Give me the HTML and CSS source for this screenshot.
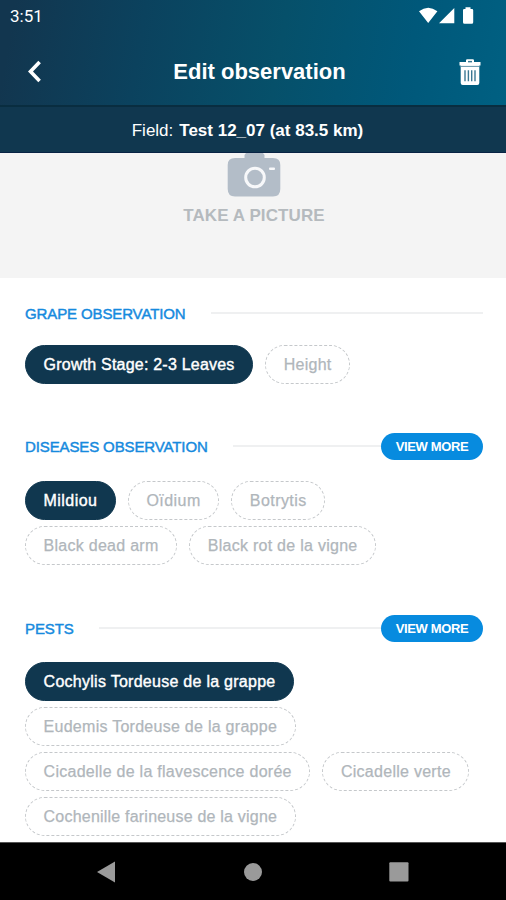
FILE: index.html
```html
<!DOCTYPE html>
<html lang="en">
<head>
<meta charset="utf-8">
<title>Edit observation</title>
<link rel="stylesheet" href="styles.css">
</head>
<body>
<div class="screen">
  <header class="top">
    <div class="status">
      <span>3:51</span>
      <svg width="56" height="18" viewBox="0 0 56 18" fill="#fff"><path d="M0 4.2Q9.2-2.8 18.4 4.2L9.2 16ZM20 16.2 35.3 1V16.2ZM44 3.2Q44 2 45.2 2H46.5V.2H51.5V2H53Q54.2 2 54.2 3.2V15.2Q54.2 16.8 52.7 16.8H45.5Q44 16.8 44 15.2Z"/></svg>
    </div>
    <div class="titlebar">
      <svg class="back" width="16" height="24" viewBox="0 0 16 24" fill="none" stroke="#fff" stroke-width="3.6"><path d="M13.6 2 4.5 11.5l9.1 9.5"/></svg>
      <h1>Edit observation</h1>
      <svg width="22" height="27" viewBox="0 0 22 27"><path fill="#fff" d="M.5 3H7V1.5Q7 .3 8.2.3H13.8Q15 .3 15 1.5V3H21.5V6.5H.5ZM9 2.2V3.2H13V2.2ZM1.7 6H20.3V24Q20.3 26 18.3 26H3.7Q1.7 26 1.7 24Z"/><path d="M9 2.5H13" stroke="#3c7893" stroke-width="1.2"/><path d="M2 7.4H20" stroke="#3c7893" stroke-width=".8"/><path d="M6 11.3V22.3M9.4 11.3V22.3M12.7 11.3V22.3M16 11.3V22.3" stroke="#3c7893" stroke-width="1.4"/></svg>
    </div>
  </header>
  <div class="field"><span>Field:</span><b>Test 12_07 (at 83.5 km)</b></div>
  <main>
    <div class="picture">
      <svg width="54" height="44" viewBox="0 0 54 44"><path fill="#b3bdc8" d="M17.5 5V2L19 0H36L37.5 2V5H46Q53.3 5 53.3 12V36Q53.3 43.5 46 43.5H8Q.7 43.5.7 36V12Q.7 5 8 5Z"/><circle cx="28" cy="24.5" r="9.3" fill="none" stroke="#f7f8fa" stroke-width="3"/><rect x="42" y="14.5" width="6" height="2.6" rx="1" fill="#f7f8fa"/></svg>
      <span>TAKE A PICTURE</span>
    </div>
    <section class="grape">
      <div class="head"><h2>GRAPE OBSERVATION</h2><i></i></div>
      <div class="chips"><span class="chip on snug">Growth Stage: 2-3 Leaves</span><span class="chip">Height</span></div>
    </section>
    <section class="diseases">
      <div class="head"><h2>DISEASES OBSERVATION</h2><i></i><button>VIEW MORE</button></div>
      <div class="chips"><span class="chip on wide">Mildiou</span><span class="chip wide">Oïdium</span><span class="chip wide">Botrytis</span><span class="chip">Black dead arm</span><span class="chip">Black rot de la vigne</span></div>
    </section>
    <section class="pests">
      <div class="head"><h2>PESTS</h2><i></i><button>VIEW MORE</button></div>
      <div class="chips"><span class="chip on">Cochylis Tordeuse de la grappe</span><span class="chip">Eudemis Tordeuse de la grappe</span><span class="chip">Cicadelle de la flavescence dorée</span><span class="chip">Cicadelle verte</span><span class="chip snug">Cochenille farineuse de la vigne</span></div>
    </section>
  </main>
  <nav>
    <svg width="18" height="22" viewBox="0 0 18 22"><path d="M0 11 18 .5v21z" fill="#9a9a9a"/></svg>
    <svg width="20" height="20" viewBox="0 0 20 20"><circle cx="11" cy="10" r="9" fill="#9a9a9a"/></svg>
    <svg width="20" height="20" viewBox="0 0 20 20"><rect x=".3" y=".3" width="19.2" height="19.2" rx="1" fill="#9a9a9a"/></svg>
  </nav>
</div>
</body>
</html>
```
FILE: styles.css
```css
* { box-sizing: border-box; }
body { margin: 0; font-family: "Liberation Sans", sans-serif; background: #fff; }
svg { display: block; flex: none; }
.screen { width: 506px; height: 900px; display: flex; flex-direction: column; overflow: hidden; }
.top { height: 105px; flex: none; color: #fff; background: linear-gradient(100deg, #12364f 3%, #0b425e 28%, #06506a 55%, #00587a 80%, #006082 100%); }
.status { height: 32px; display: flex; justify-content: space-between; align-items: center; padding: 0 31px 0 10px; font: 17px Roboto, sans-serif; }
.titlebar { height: 73px; display: flex; align-items: center; justify-content: space-between; padding: 7px 25px 0 26px; }
.titlebar h1 { margin: 0 0 0 18px; font-size: 22px; line-height: 26px; }
.field { height: 48px; flex: none; display: flex; justify-content: center; align-items: center; gap: 6px; padding: 3px 11px 0 0; color: #fff; font-size: 17px; background: #10374f; border-top: 2px solid #092d40; border-bottom: 1px solid #082344; }
main { flex: 1; min-height: 0; overflow: hidden; }
.picture { height: 125px; background: #f4f4f4; display: flex; flex-direction: column; align-items: center; gap: 8px; padding-left: 2px; color: #b5babe; font-size: 17px; letter-spacing: .1px; font-weight: bold; line-height: 21px; }
section { padding: 0 23px 0 25px; }
.grape { padding-top: 21px; height: 133px; }
.diseases { padding-top: 21px; height: 181px; }
.pests { padding-top: 22px; }
.head { height: 28px; display: flex; align-items: center; }
.head h2 { margin: 0 25px 0 0; font-size: 15px; font-weight: normal; letter-spacing: -.12px; color: #168ade; -webkit-text-stroke: .45px #168ade; }
.head i { flex: 1; height: 2px; background: #eff0f1; }
.head button { width: 102px; height: 27px; padding: 0; border: 0; border-radius: 14px; background: #078bdf; color: #fff; font: bold 13px "Liberation Sans", sans-serif; letter-spacing: -.35px; }
.chips { display: flex; flex-wrap: wrap; gap: 6px 12px; padding-top: 18px; }
.diseases .chips { padding-top: 21px; }
.pests .chips { padding-top: 20px; }
.chip { height: 39px; padding: 0 17.6px; display: flex; align-items: center; border: 1px dashed #c5c8cb; border-radius: 20px; color: #b0b6bb; font-size: 16px; letter-spacing: .27px; white-space: nowrap; -webkit-text-stroke: .25px #b0b6bb; }
.snug { letter-spacing: .21px; }
.wide { letter-spacing: .43px; }
.diseases .chip { padding-top: 1px; }
.on { border: 1px solid #10374f; background: #10374f; color: #fff; -webkit-text-stroke: .4px #fff; }
nav { height: 58px; flex: none; display: flex; align-items: center; justify-content: space-between; padding: 0 97px; background: #000; border-top: 1px solid #555; }
```
